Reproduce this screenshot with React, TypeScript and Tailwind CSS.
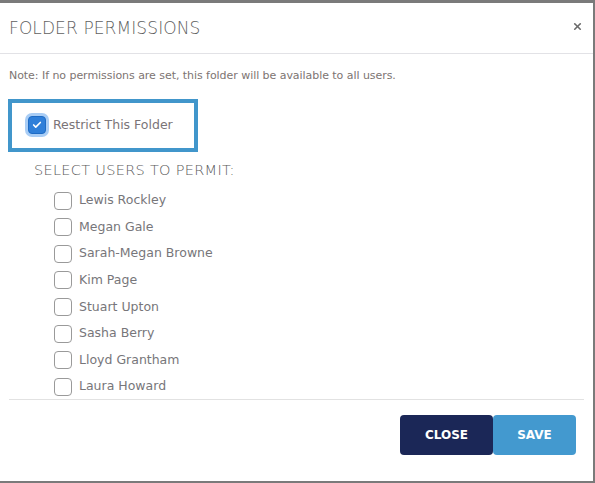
import { X, Check } from 'lucide-react';

const users = [
  'Lewis Rockley',
  'Megan Gale',
  'Sarah-Megan Browne',
  'Kim Page',
  'Stuart Upton',
  'Sasha Berry',
  'Lloyd Grantham',
  'Laura Howard',
];

export default function App() {
  return (
    <div className="w-[595px] h-[483px] bg-[#7a7a7a] pt-[3px] pb-[2px] pr-[2px] font-['DejaVu_Sans',sans-serif]">
      <div className="h-full bg-white flex flex-col">
        <div className="h-[51px] flex items-center justify-between pl-[9px] pr-[10px] border-b border-[#e2e2e6]">
          <h2 className="text-[17px] font-extralight text-[#5f5f5f] tracking-[0.1px] mt-[1px]">FOLDER PERMISSIONS</h2>
          <X size={11} strokeWidth={3.5} className="text-[#6a6a6a] -mt-[4px]" />
        </div>
        <div className="px-[9px] pt-[14px]">
          <p className="text-[11px] text-[#7d7472] tracking-[-0.05px]">
            Note: If no permissions are set, this folder will be available to all users.
          </p>
          <div className="mt-[14px] -ml-[1px] w-[190px] h-[53px] border-[4px] border-[#4196cb] flex items-center pl-[16px] gap-[7px]">
            <span className="w-[18px] h-[18px] rounded-[4px] bg-[#2f7fd9] border border-[#1e6bc4] ring-[3px] ring-[#a9cdf5] flex items-center justify-center">
              <Check size={10} strokeWidth={4} className="text-white" />
            </span>
            <span className="text-[12.5px] text-[#7a7478]">Restrict This Folder</span>
          </div>
          <div className="pl-[25px] mt-[8px] text-[14.5px] font-extralight text-[#5a5a5a] tracking-[0.3px]">SELECT USERS TO PERMIT:</div>
          <ul className="pl-[45px] mt-[6px] flex flex-col">
            {users.map((u) => (
              <li key={u} className="h-[26.6px] flex items-center gap-[7px]">
                <span className="w-[18px] h-[18px] rounded-[4px] border border-[#9a9a9a] bg-white" />
                <span className="text-[12.5px] text-[#77767a]">{u}</span>
              </li>
            ))}
          </ul>
          <div className="border-b border-[#e2e2e2] mt-[-1px]" />
          <div className="flex justify-end pr-[8px] mt-[15px]">
            <button className="w-[93px] h-[40px] bg-[#1b2757] text-white text-[12px] font-semibold rounded-[4px]">CLOSE</button>
            <button className="w-[83px] h-[40px] bg-[#4399cf] text-white text-[12px] font-semibold rounded-[4px]">SAVE</button>
          </div>
        </div>
      </div>
    </div>
  );
}
